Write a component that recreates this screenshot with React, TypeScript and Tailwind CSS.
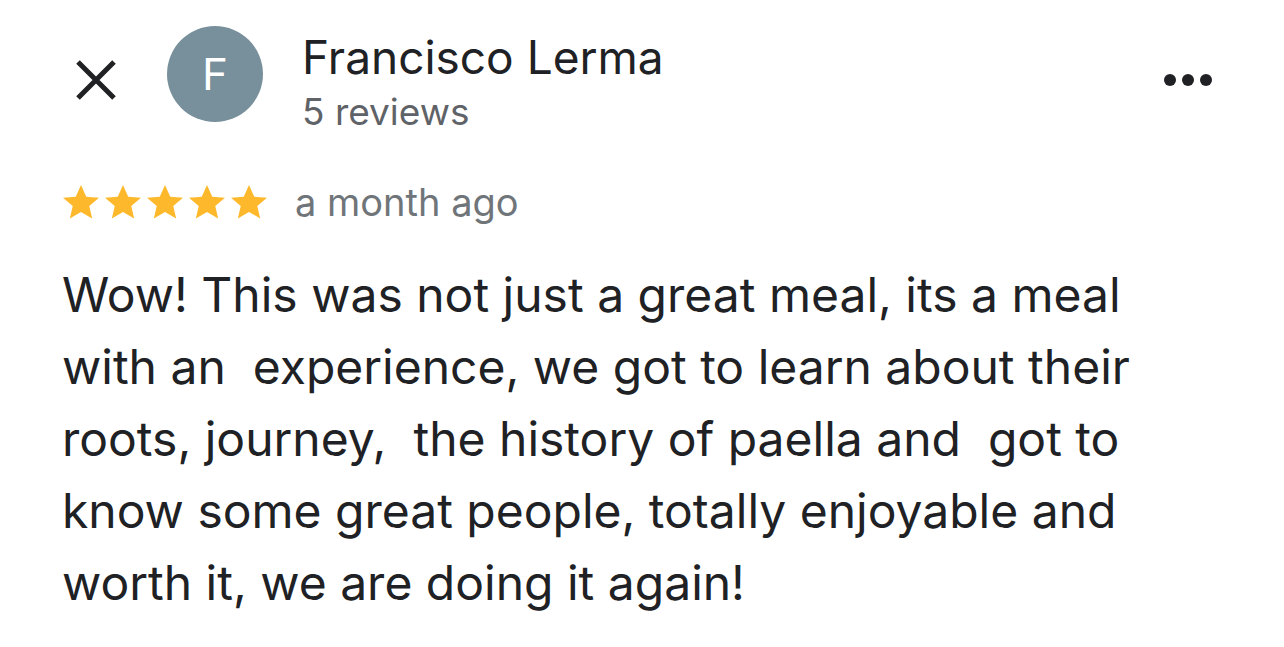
export default function App() {
  const stars = [0, 1, 2, 3, 4]
  return (
    <div className="w-[1284px] h-[647px] bg-white overflow-hidden font-['Inter',sans-serif] text-[#202124]">
      <div className="flex items-start pl-[75px] pr-[72px] pt-[26px] h-[140px]">
        <div className="flex items-center h-[96px]">
          <svg width="42" height="42" viewBox="0 0 42 42" className="mt-[12px]">
            <path d="M3 3 L39 39 M39 3 L3 39" stroke="#202124" strokeWidth="5" strokeLinecap="butt" />
          </svg>
        </div>
        <div className="ml-[50px] w-[96px] h-[96px] rounded-full bg-[#78909c] flex items-center justify-center text-white text-[44px]">
          F
        </div>
        <div className="ml-[39px] flex flex-col">
          <div className="text-[46px] leading-[50px] mt-[6px]">Francisco Lerma</div>
          <div className="text-[37px] leading-[46px] mt-[7px] text-[#5f6368]">5 reviews</div>
        </div>
        <div className="ml-auto flex gap-[6px] mt-[48px]">
          <span className="w-[12px] h-[12px] rounded-full bg-[#202124]" />
          <span className="w-[12px] h-[12px] rounded-full bg-[#202124]" />
          <span className="w-[12px] h-[12px] rounded-full bg-[#202124]" />
        </div>
      </div>
      <div className="flex items-center pl-[63px] mt-[41px]">
        <div className="flex gap-[6px]">
          {stars.map((i) => (
            <svg key={i} width="36" height="34" viewBox="2 2.2 20 19.2" preserveAspectRatio="none">
              <path d="M12 2.2l2.9 6.6 7.1.6-5.4 4.7 1.6 7-6.2-3.7-6.2 3.7 1.6-7L2 9.4l7.1-.6z" fill="#fdb92b" />
            </svg>
          ))}
        </div>
        <span className="ml-[28px] text-[38px] text-[#70757a] leading-[42px]">a month ago</span>
      </div>
      <p className="pl-[62px] mt-[36px] text-[48px] leading-[72px] whitespace-pre">
        {"Wow! This was not just a great meal, its a meal\nwith an  experience, we got to learn about their\nroots, journey,  the history of paella and  got to\nknow some great people, totally enjoyable and\nworth it, we are doing it again!"}
      </p>
    </div>
  )
}
